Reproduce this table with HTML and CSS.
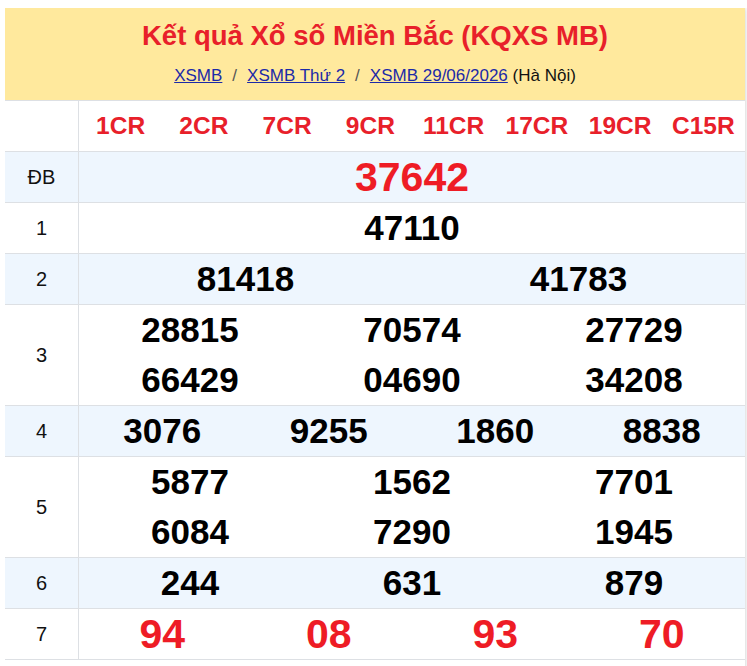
FILE: index.html
```html
<!DOCTYPE html>
<html lang="vi">
<head>
<meta charset="utf-8">
<title>KQXS MB</title>
<link rel="stylesheet" href="styles.css">
</head>
<body>
<div class="box">
  <div class="head">
    <h2 class="title">Kết quả Xổ số Miền Bắc (KQXS MB)</h2>
    <div class="crumbs"><a href="#">XSMB</a><span class="sep">/</span><a href="#">XSMB Thứ 2</a><span class="sep">/</span><a href="#">XSMB 29/06/2026</a> (Hà Nội)</div>
  </div>
  <div class="row">
    <div class="lbl"></div>
    <div class="vals c8 codes"><span>1CR</span><span>2CR</span><span>7CR</span><span>9CR</span><span>11CR</span><span>17CR</span><span>19CR</span><span>C15R</span></div>
  </div>
  <div class="row alt">
    <div class="lbl">ĐB</div>
    <div class="vals c1 big red"><span>37642</span></div>
  </div>
  <div class="row">
    <div class="lbl">1</div>
    <div class="vals c1"><span>47110</span></div>
  </div>
  <div class="row alt">
    <div class="lbl">2</div>
    <div class="vals c2"><span>81418</span><span>41783</span></div>
  </div>
  <div class="row">
    <div class="lbl">3</div>
    <div class="vals c3"><span>28815</span><span>70574</span><span>27729</span><span>66429</span><span>04690</span><span>34208</span></div>
  </div>
  <div class="row alt">
    <div class="lbl">4</div>
    <div class="vals c4"><span>3076</span><span>9255</span><span>1860</span><span>8838</span></div>
  </div>
  <div class="row">
    <div class="lbl">5</div>
    <div class="vals c3"><span>5877</span><span>1562</span><span>7701</span><span>6084</span><span>7290</span><span>1945</span></div>
  </div>
  <div class="row alt">
    <div class="lbl">6</div>
    <div class="vals c3"><span>244</span><span>631</span><span>879</span></div>
  </div>
  <div class="row">
    <div class="lbl">7</div>
    <div class="vals c4 big red"><span>94</span><span>08</span><span>93</span><span>70</span></div>
  </div>
  <div class="tail"></div>
</div>
</body>
</html>
```
FILE: styles.css
```css
* { box-sizing: border-box; }
html, body { background: #ffffff; }
body {
  margin: 8px 0 0 5px;
  font-family: "Liberation Sans", Arial, sans-serif;
  color: #000;
}
.box {
  width: 740px;
  background: #fff;
  box-shadow: 0 0 5px rgba(0, 0, 0, 0.22);
}
.head {
  background: #ffe99d;
  text-align: center;
  padding: 12px 0 12px;
  border-bottom: 1px solid #dde0e4;
}
.title {
  margin: 0 0 12px;
  font-size: 27.5px;
  line-height: 32px;
  font-weight: bold;
  color: #e8202a;
}
.crumbs {
  font-size: 17px;
  line-height: 24px;
  color: #111;
}
.crumbs a {
  color: #1c2aa8;
  text-decoration: underline;
}
.sep {
  color: #555;
  margin: 0 10px;
}
.row {
  display: grid;
  grid-template-columns: 74px 1fr;
  border-bottom: 1px solid #dde0e4;
}
.row.alt { background: #eef6fe; }
.lbl {
  border-right: 1px solid #dde0e4;
  display: flex;
  align-items: center;
  justify-content: center;
  font-size: 20px;
  color: #111;
}
.vals {
  display: grid;
  text-align: center;
  font-size: 35px;
  font-weight: bold;
  line-height: 50px;
}
.vals span { display: block; }
.c1 { grid-template-columns: 1fr; }
.c2 { grid-template-columns: repeat(2, 1fr); }
.c3 { grid-template-columns: repeat(3, 1fr); }
.c4 { grid-template-columns: repeat(4, 1fr); }
.c8 { grid-template-columns: repeat(8, 1fr); }
.codes {
  font-size: 24.5px;
  color: #e8202a;
}
.big { font-size: 41px; }
.red { color: #ee1c25; }
.tail { height: 20px; }
```
